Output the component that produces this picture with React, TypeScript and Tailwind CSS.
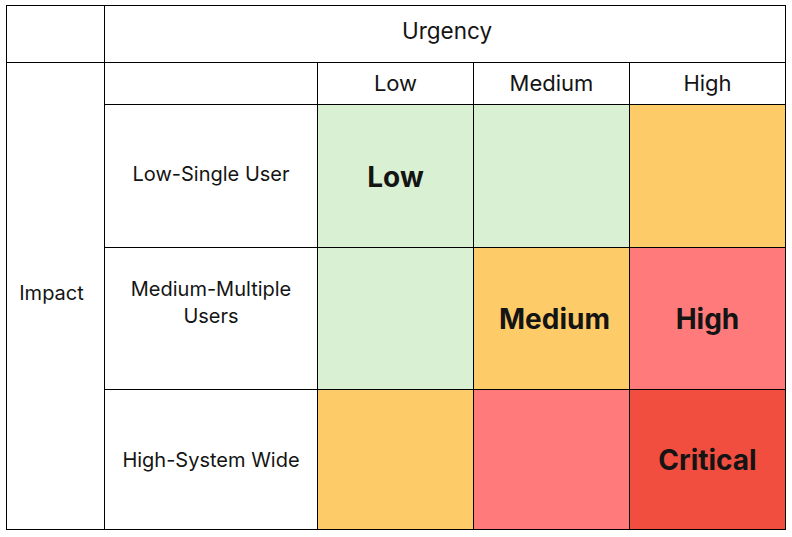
import React from 'react';

const cell = 'bg-white flex items-center justify-center text-center';

export default function App() {
  return (
    <div className="w-[792px] h-[537px] bg-white pl-[6px] pt-[5px] text-[#141414]" style={{ fontFamily: 'Inter, "Open Sans", sans-serif' }}>
      <div className="grid w-fit grid-cols-[97px_212px_155px_155px_155px] grid-rows-[56px_41px_142px_141px_139px] gap-px p-px bg-black">
        <div className="bg-white" />
        <div className={`${cell} col-span-4 text-[22.5px] pb-[6px] pl-[4px]`}>Urgency</div>

        <div className={`${cell} row-span-4 text-[20px] pb-[6px] pr-[8px]`}>Impact</div>
        <div className="bg-white" />
        <div className={`${cell} text-[22px]`}>Low</div>
        <div className={`${cell} text-[22px]`}>Medium</div>
        <div className={`${cell} text-[22px]`}>High</div>

        <div className={`${cell} text-[20px] pb-[4px]`}>Low-Single User</div>
        <div className={`${cell} !bg-[#d9f1d2] text-[28px] font-bold pt-[1px]`}>Low</div>
        <div className="bg-[#d9f1d2]" />
        <div className="bg-[#fecb69]" />

        <div className={`${cell} text-[20px] leading-[27px] pb-[31px]`}>
          Medium-Multiple
          <br />
          Users
        </div>
        <div className="bg-[#d9f1d2]" />
        <div className={`${cell} !bg-[#fecb69] text-[28px] font-bold pl-[6px]`}>Medium</div>
        <div className={`${cell} !bg-[#ff7b7b] text-[28px] font-bold`}>High</div>

        <div className={`${cell} text-[20px]`}>High-System Wide</div>
        <div className="bg-[#fecb69]" />
        <div className="bg-[#ff7b7b]" />
        <div className={`${cell} !bg-[#f24e40] text-[28px] font-bold`}>Critical</div>
      </div>
    </div>
  );
}
